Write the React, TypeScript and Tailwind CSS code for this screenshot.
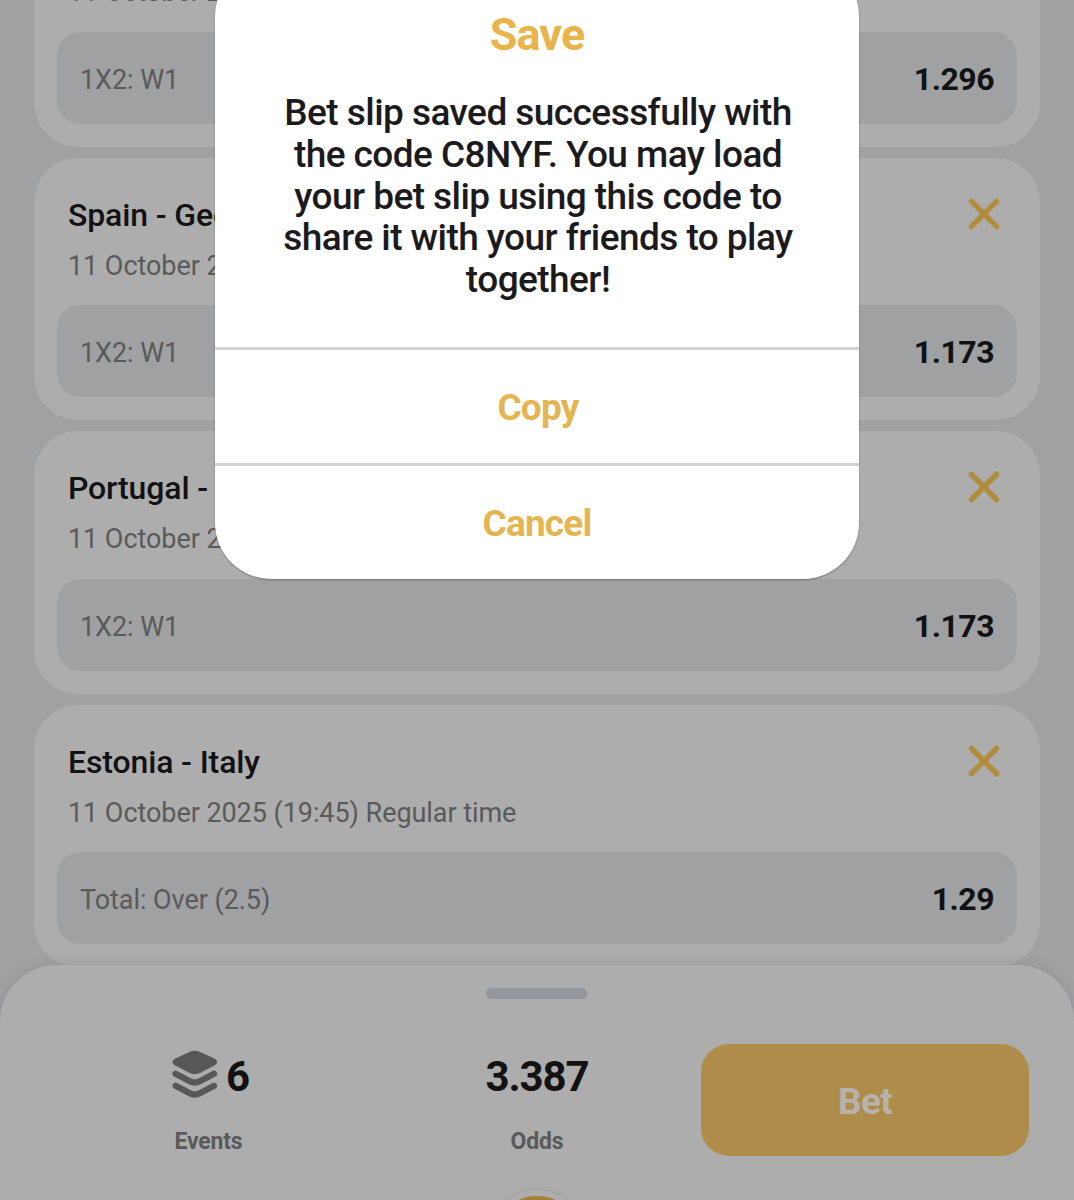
type Bet = { match: string; date: string; market: string; odds: string };

const bets: Bet[] = [
  { match: "France - Azerbaijan", date: "11 October 2025 (19:45) Regular time", market: "1X2: W1", odds: "1.296" },
  { match: "Spain - Georgia", date: "11 October 2025 (19:45) Regular time", market: "1X2: W1", odds: "1.173" },
  { match: "Portugal - Ireland", date: "11 October 2025 (19:45) Regular time", market: "1X2: W1", odds: "1.173" },
  { match: "Estonia - Italy", date: "11 October 2025 (19:45) Regular time", market: "Total: Over (2.5)", odds: "1.29" },
];

function CloseIcon() {
  return (
    <svg className="h-8 w-8" viewBox="0 0 32 32" fill="none" stroke="#b28c3d" strokeWidth="5.4" strokeLinecap="round">
      <path d="M3.400 3.400 28.600 28.600M28.600 3.400 3.400 28.600" />
    </svg>
  );
}

function LayersIcon() {
  return (
    <svg className="h-12 w-[46px]" viewBox="0 0 46 48" fill="#575757">
      <path d="M17.500 2Q22.800 -.4 28.100 2L42.400 8.600Q48 12 42.400 15.400L28.500 22.800Q22.800 25.600 17.100 22.800L3.200 15.400Q-2.400 12 3.200 8.600Z" />
      <g fill="none" stroke="#575757" strokeWidth="6.2" strokeLinecap="round">
        <path d="M3.600 23.700 17.300 31Q22.800 34.200 28.300 31L42 23.700" />
        <path d="M3.600 35.700 17.300 43Q22.800 46.200 28.300 43L42 35.700" />
      </g>
    </svg>
  );
}

function BetCard({ bet }: { bet: Bet }) {
  return (
    <article className="flex h-[262.5px] shrink-0 flex-col rounded-[44px] bg-[#adadad] px-[23px] pb-[23px]">
      <div className="flex flex-1 justify-between pr-[17px] pl-[11px]">
        <div className="whitespace-nowrap pt-[37px]">
          <h2 className="text-[32px] leading-[40px] font-medium tracking-[-0.13px] text-[#121212]">{bet.match}</h2>
          <p className="mt-[15px] text-[27px] leading-[32px] tracking-[-0.06px] text-[#5a5a5a]">{bet.date}</p>
        </div>
        <div className="pt-[40px]">
          <CloseIcon />
        </div>
      </div>
      <div className="flex h-[92px] items-center justify-between rounded-[24px] bg-[#9fa1a3] px-[23px]">
        <span className="pt-[4px] text-[27px] tracking-[-0.06px] text-[#5a5a5a]">{bet.market}</span>
        <span className="pt-[2px] text-[32px] font-bold tracking-[-0.5px] text-[#121212]">{bet.odds}</span>
      </div>
    </article>
  );
}

export default function App() {
  return (
    <div className="relative h-[1200px] w-[1074px] overflow-hidden bg-[#9fa1a3] font-['Roboto',sans-serif]">
      <main className="-mt-[115.7px] flex flex-col gap-[11px] px-[34px]">
        {bets.map((bet) => (
          <BetCard key={bet.match} bet={bet} />
        ))}
      </main>

      <footer className="absolute inset-x-0 top-[965px] h-[235px] overflow-hidden rounded-t-[56px] bg-[#adadad] shadow-[0_-1px_12px_rgba(80,80,90,0.18)]">
        <div className="mt-[23px] ml-[486px] h-[11px] w-[101px] rounded-full bg-[#93969d]" />
        <div className="flex pt-[45px]">
          <div className="flex w-[417px] flex-col items-center pt-[6px]">
            <div className="flex h-[48px] items-center gap-[8px] pl-[4px]">
              <LayersIcon />
              <span className="pt-[4px] text-[42px] font-bold tracking-[-1px] text-[#121212]">6</span>
            </div>
            <span className="mt-[28px] text-[23px] leading-[32px] font-bold tracking-[-0.2px] text-[#5a5a5a]">Events</span>
          </div>
          <div className="flex w-[240px] flex-col items-center pt-[6px]">
            <div className="flex h-[48px] items-center">
              <span className="pt-[4px] text-[42px] font-bold tracking-[-1.1px] text-[#121212]">3.387</span>
            </div>
            <span className="mt-[28px] text-[23px] leading-[32px] font-bold tracking-[-0.2px] text-[#5a5a5a]">Odds</span>
          </div>
          <button className="ml-[44px] h-[112px] w-[328px] rounded-[28px] bg-[#ae8d4a] pt-[3px] text-[37px] font-bold tracking-[-0.7px] text-[#b7b2ab]">
            Bet
          </button>
        </div>
        <div className="absolute top-[225px] left-[486px] h-[102px] w-[102px] rounded-full border-[6px] border-[#adadb0] bg-[#a58138] shadow-[0_0_5px_rgba(80,80,90,0.2)]" />
      </footer>

      <section className="absolute -top-[40px] left-[215px] flex h-[619px] w-[644px] flex-col rounded-[56px] bg-white text-center shadow-[0_1px_2px_rgba(0,0,0,0.3)]">
        <div className="flex-1 pt-[48px]">
          <h1 className="text-[45px] leading-[54px] font-bold tracking-[-0.9px] text-[#e9b44c]">Save</h1>
          <p className="mt-[30px] pl-[2px] text-[37px] leading-[41.8px] font-medium tracking-[-0.55px] whitespace-nowrap text-[#1c1a1c]">
            Bet slip saved successfully with
            <br />
            the code C8NYF. You may load
            <br />
            your bet slip using this code to
            <br />
            share it with your friends to play
            <br />
            together!
          </p>
        </div>
        <button className="h-[116px] border-t-[3px] border-[#d1d2d4] pt-[2.500px] pl-[2px] text-[37px] font-bold tracking-[-0.8px] text-[#e5b552]">Copy</button>
        <button className="h-[116px] border-t-[3px] border-[#d1d2d4] pt-[2.500px] text-[37px] font-bold tracking-[-0.8px] text-[#e5b552]">Cancel</button>
      </section>
    </div>
  );
}
